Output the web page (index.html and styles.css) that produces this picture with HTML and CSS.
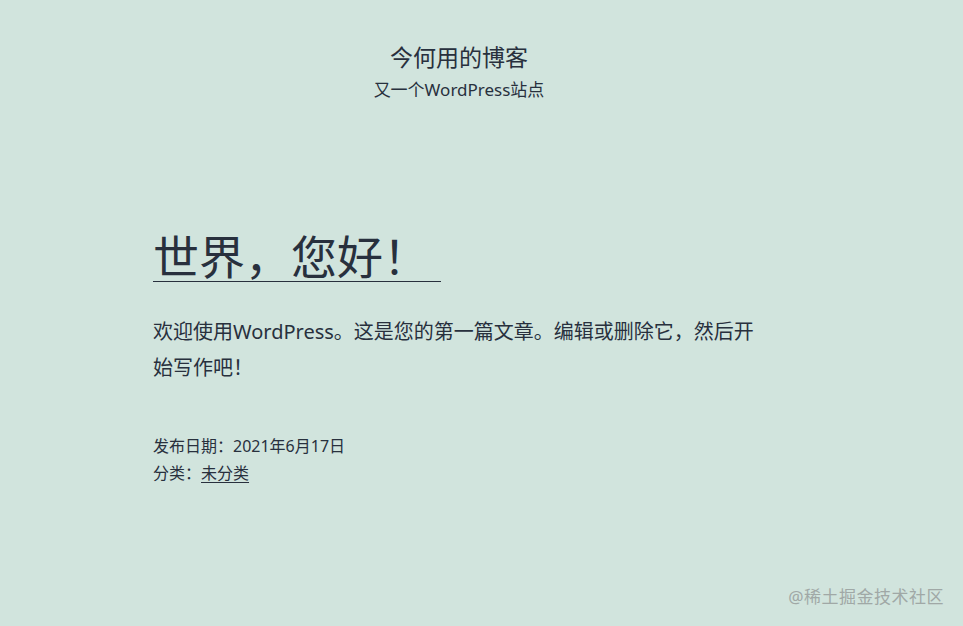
FILE: index.html
```html
<!DOCTYPE html>
<html lang="zh-CN">
<head>
<meta charset="utf-8">
<title>今何用的博客</title>
<link rel="stylesheet" href="styles.css">
</head>
<body>
<div class="page">
  <header class="site-header">
    <div class="site-title">今何用的博客</div>
    <div class="site-desc">又一个WordPress站点</div>
  </header>
  <main class="post">
    <h1 class="post-title"><span class="title-text">世界，您好！</span></h1>
    <p class="post-content">欢迎使用WordPress。这是您的第一篇文章。编辑或删除它，然后开始写作吧！</p>
    <div class="post-meta">
      <div class="meta-line">发布日期：2021年6月17日</div>
      <div class="meta-line">分类：<a class="cat-link" href="#">未分类</a></div>
    </div>
  </main>
</div>
<div class="watermark">@稀土掘金技术社区</div>
</body>
</html>
```
FILE: styles.css
```css
html, body {
  margin: 0;
  padding: 0;
}
body {
  background: #d1e4dd;
  color: #28303d;
  font-family: "Noto Sans", "Noto Sans CJK SC", sans-serif;
  width: 963px;
  height: 626px;
  overflow: hidden;
  position: relative;
}
.page {
  margin-left: 153px;
  width: 612px;
}
.site-header {
  padding-top: 42px;
  text-align: center;
}
.site-title {
  font-size: 23px;
  line-height: 30px;
}
.site-desc {
  font-size: 17px;
  line-height: 24px;
  margin-top: 6px;
}
.post {
  padding-top: 126px;
}
.post-title {
  margin: 0;
  font-weight: 400;
  font-size: 46px;
  line-height: 56px;
}
.title-text {
  display: inline-block;
  border-bottom: 1px solid #28303d;
  line-height: 49px;
  padding-right: 12px;
}
.post-content {
  margin: 30px 0 0;
  font-size: 20px;
  line-height: 36px;
}
.post-meta {
  margin-top: 47px;
  font-size: 16px;
  line-height: 27px;
}
.cat-link {
  color: #28303d;
  text-decoration: underline;
  text-underline-offset: 3px;
}
.watermark {
  position: absolute;
  right: 19px;
  bottom: 18px;
  font-size: 17px;
  color: #a0a8a6;
  letter-spacing: 0.5px;
}
```
